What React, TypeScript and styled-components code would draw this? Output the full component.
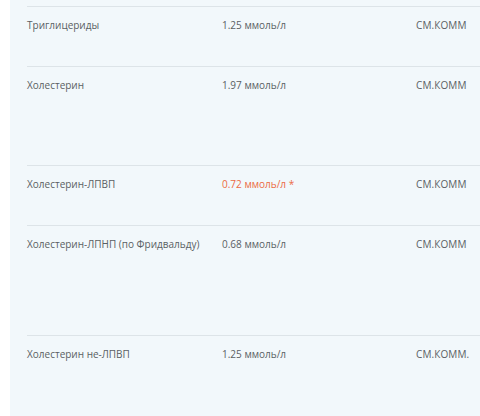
import React from 'react';
import styled, { createGlobalStyle } from 'styled-components';

type Result = {
  name: string;
  value: string;
  norm: string;
  height: number;
  flagged?: boolean;
};

const results: Result[] = [
  { name: 'Триглицериды', value: '1.25 ммоль/л', norm: 'СМ.КОММ', height: 60 },
  { name: 'Холестерин', value: '1.97 ммоль/л', norm: 'СМ.КОММ', height: 99 },
  { name: 'Холестерин-ЛПВП', value: '0.72 ммоль/л *', norm: 'СМ.КОММ', height: 60, flagged: true },
  { name: 'Холестерин-ЛПНП (по Фридвальду)', value: '0.68 ммоль/л', norm: 'СМ.КОММ', height: 110 },
  { name: 'Холестерин не-ЛПВП', value: '1.25 ммоль/л', norm: 'СМ.КОММ.', height: 90 },
];

//
// MAIN COMPONENT
//
const App = () => {
  return (
    <>
      <GlobalStyle />
      <Panel>
        <ResultList>
          {results.map((r) => (
            <Row key={r.name} $height={r.height}>
              <Name>{r.name}</Name>
              <Value $flagged={r.flagged}>{r.value}</Value>
              <Norm>{r.norm}</Norm>
            </Row>
          ))}
        </ResultList>
      </Panel>
    </>
  );
};

export default App;

//
// STYLED COMPONENT
//
const GlobalStyle = createGlobalStyle`
  html, body {
    margin: 0;
    padding: 0;
    background: #ffffff;
  }
  body {
    font-family: "Open Sans", "Noto Sans", sans-serif;
  }
`;

const Panel = styled.div`
  margin-left: 10px;
  height: 416px;
  overflow: hidden;
  background: #f2f8fb;
  padding-top: 6px;
  box-sizing: border-box;
`;

const ResultList = styled.ul`
  list-style: none;
  margin: 0 0 0 17px;
  padding: 0;
`;

const Row = styled.li<{ $height: number }>`
  display: grid;
  grid-template-columns: 195px 194px 1fr;
  align-items: start;
  height: ${(p) => p.$height}px;
  box-sizing: border-box;
  border-top: 1px solid #dde4e8;
  padding-top: 11px;
  font-size: 10px;
  line-height: 14px;
  color: #5a5f63;
`;

const Name = styled.div`
  white-space: nowrap;
`;

const Value = styled.div<{ $flagged?: boolean }>`
  white-space: nowrap;
  color: ${(p) => (p.$flagged ? '#ec6a43' : 'inherit')};
`;

const Norm = styled.div`
  white-space: nowrap;
  letter-spacing: 0.1px;
`;
